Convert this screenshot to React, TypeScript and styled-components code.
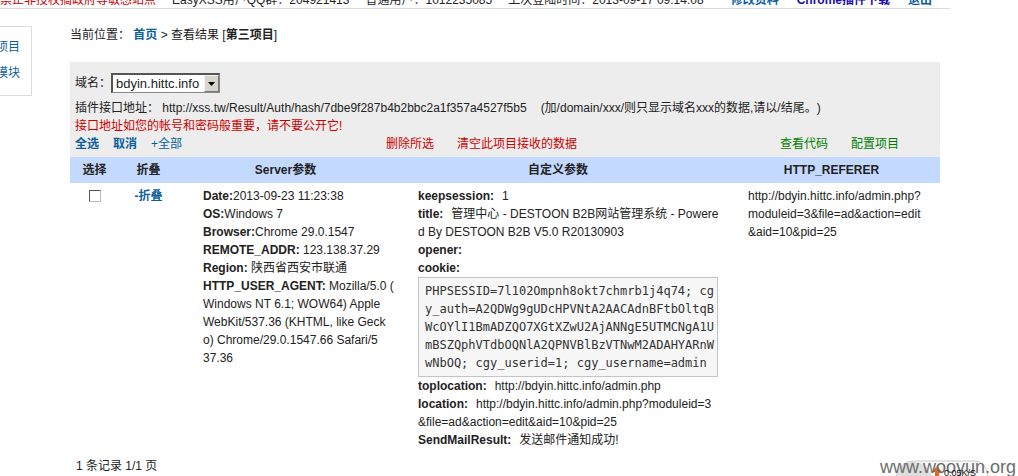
import React from "react";
import styled, { createGlobalStyle } from "styled-components";

const GlobalStyle = createGlobalStyle`
  * { box-sizing: border-box; }
  body {
    margin: 0;
    background: #fff;
    color: #222;
    font: 12px/18px "Liberation Sans", Arial, "Noto Sans CJK SC", sans-serif;
    text-spacing-trim: space-all;
    overflow: hidden;
  }
`;

const Page = styled.div`
  position: relative;
  overflow: hidden;
  min-height: 100vh;
`;

const TopBar = styled.header`
  display: flex;
  align-items: flex-end;
  height: 9px;
  margin-right: 68px;
  border-bottom: 1px solid #d9d9d9;
  white-space: nowrap;
  overflow: hidden;
`;

const TopItem = styled.span<{ $color?: string }>`
  flex: none;
  line-height: 16px;
  margin-right: 16px;
  color: ${(p) => p.$color ?? "#222"};
`;

const TopLink = styled.a<{ $color?: string }>`
  flex: none;
  line-height: 16px;
  margin-right: 18px;
  font-weight: bold;
  text-decoration: none;
  color: ${(p) => p.$color ?? "#0b5f9b"};
`;

const TopLinks = styled.nav`
  display: flex;
  margin-left: auto;
`;

const Body = styled.div`
  display: flex;
  align-items: flex-start;
  padding: 17px 78px 0 0;
`;

const SideMenu = styled.nav`
  flex: none;
  width: 32px;
  margin-right: 38px;
  padding: 7px 11px 9px 0;
  border: 1px solid #dcdcdc;
  border-left: 0;
  overflow: hidden;
`;

const SideLink = styled.a`
  display: flex;
  justify-content: flex-end;
  line-height: 26px;
  white-space: nowrap;
  text-decoration: none;
  color: #0b5f9b;
`;

const Main = styled.main`
  flex: 1;
  min-width: 0;
`;

const Breadcrumb = styled.div`
  margin-bottom: 18px;
`;

const Anchor = styled.a<{ $color?: string; $bold?: boolean }>`
  text-decoration: none;
  color: ${(p) => p.$color ?? "#0b5f9b"};
  font-weight: ${(p) => (p.$bold ? "bold" : "normal")};
`;

const Panel = styled.section`
  padding: 11px 5px 4px;
  background: #ededed;
`;

const DomainRow = styled.div`
  display: flex;
  align-items: center;
  margin-bottom: 6px;
`;

const SelectBox = styled.div`
  position: relative;
  width: 109px;
  height: 20px;
`;

const DomainSelect = styled.select`
  appearance: none;
  width: 100%;
  height: 100%;
  padding: 0 18px 0 3px;
  border: 1px solid #888;
  border-top: 2px solid #555;
  border-left: 2px solid #555;
  border-radius: 0;
  background: #fff;
  color: #222;
  font: 13px "Liberation Sans", Arial, sans-serif;
`;

const SelectArrow = styled.span`
  position: absolute;
  top: 2px;
  right: 1px;
  bottom: 1px;
  width: 15px;
  display: flex;
  align-items: center;
  justify-content: center;
  background: #d8d5ce;
  border: 1px solid #777;
  border-top-color: #f4f4f4;
  border-left-color: #f4f4f4;
  pointer-events: none;
`;

const ApiRow = styled.div`
  display: flex;
  flex-wrap: wrap;
  column-gap: 14px;
`;

const Warning = styled.div`
  color: #c00;
`;

const Actions = styled.div`
  display: grid;
  grid-template-columns: 311px 1fr auto;
`;

const ActionGroup = styled.div<{ $gap: number }>`
  display: flex;
  gap: ${(p) => p.$gap}px;
  padding-right: 36px;
`;

const Table = styled.table`
  width: 100%;
  table-layout: fixed;
  border-collapse: collapse;
`;

const HeadCell = styled.th`
  height: 26px;
  padding: 0;
  background: #c3d9ff;
  text-align: center;
`;

const Cell = styled.td<{ $center?: boolean }>`
  padding: ${(p) => (p.$center ? "4px 0" : "4px 0 0 25px")};
  text-align: ${(p) => (p.$center ? "center" : "left")};
  vertical-align: top;
  white-space: nowrap;
`;

const Check = styled.input`
  appearance: none;
  display: inline-block;
  width: 12px;
  height: 12px;
  margin: 3px 0 0;
  border: 1px solid #bbb;
  border-top-color: #555;
  border-left-color: #555;
  background: #fff;
`;

const Label = styled.b<{ $spaced?: boolean }>`
  margin-right: ${(p) => (p.$spaced ? 8 : 0)}px;
`;

const Cookie = styled.pre`
  width: 300px;
  margin: 0;
  padding: 4px 0 4px 6px;
  border: 1px solid #c4c4c4;
  background: #f7f7f7;
  color: #333;
  font: 12px/18px "DejaVu Sans Mono", monospace;
`;

const Pager = styled.div`
  padding: 8px 6px 0;
`;

const Watermark = styled.div`
  position: absolute;
  right: 2px;
  top: 457px;
  color: #6c6c6c;
  font-size: 18px;
  line-height: 20px;
`;

const SpeedWidget = styled.svg`
  position: absolute;
  right: 0;
  top: 456px;
`;

const Speed = styled.span`
  position: absolute;
  right: 42px;
  top: 464px;
  font-size: 9px;
  color: #111;
`;

const serverFields: [string, string[]][] = [
  ["Date:", ["2013-09-23 11:23:38"]],
  ["OS:", ["Windows 7"]],
  ["Browser:", ["Chrome 29.0.1547"]],
  ["REMOTE_ADDR:", [" 123.138.37.29"]],
  ["Region:", [" 陕西省西安市联通"]],
  [
    "HTTP_USER_AGENT:",
    [" Mozilla/5.0 (", "Windows NT 6.1; WOW64) Apple", "WebKit/537.36 (KHTML, like Geck", "o) Chrome/29.0.1547.66 Safari/5", "37.36"],
  ],
];

const cookie = [
  "PHPSESSID=7l102Ompnh8okt7chmrb1j4q74; cg",
  "y_auth=A2QDWg9gUDcHPVNtA2AACAdnBFtbOltqB",
  "WcOYlI1BmADZQO7XGtXZwU2AjANNgE5UTMCNgA1U",
  "mBSZQphVTdbOQNlA2QPNVBlBzVTNwM2ADAHYARnW",
  "wNbOQ; cgy_userid=1; cgy_username=admin",
].join("\n");

const Lines = ({ items }: { items: string[] }) => (
  <>
    {items.map((t, i) => (
      <React.Fragment key={i}>
        {i > 0 && <br />}
        {t}
      </React.Fragment>
    ))}
  </>
);

const Field = ({ name, lines, spaced }: { name: string; lines: string[]; spaced?: boolean }) => (
  <div>
    <Label $spaced={spaced}>{name}</Label>
    <Lines items={lines} />
  </div>
);

export default function App() {
  return (
    <Page>
      <GlobalStyle />
      <TopBar>
        <TopItem $color="#c00">禁止非授权搞政府等敏感站点</TopItem>
        <TopItem>EasyXSS用户QQ群：204921413</TopItem>
        <TopItem>普通用户：1012235085</TopItem>
        <TopItem>上次登陆时间：2013-09-17 09:14:08</TopItem>
        <TopLinks>
          <TopLink href="#profile">修改资料</TopLink>
          <TopLink href="#plugin" $color="#1a0dab">Chrome插件下载</TopLink>
          <TopLink href="#logout">退出</TopLink>
        </TopLinks>
      </TopBar>
      <Body>
        <SideMenu>
          <SideLink href="#projects">项目</SideLink>
          <SideLink href="#modules">模块</SideLink>
        </SideMenu>
        <Main>
          <Breadcrumb>
            当前位置： <Anchor href="#home" $bold>首页</Anchor> &gt; 查看结果 [<b>第三项目</b>]
          </Breadcrumb>
          <Panel>
            <DomainRow>
              <label htmlFor="domain">域名：</label>
              <SelectBox>
                <DomainSelect id="domain">
                  <option>bdyin.hittc.info</option>
                </DomainSelect>
                <SelectArrow>
                  <svg width="7" height="4" viewBox="0 0 7 4"><path d="M0 0h7L3.500 4z" fill="#000" /></svg>
                </SelectArrow>
              </SelectBox>
            </DomainRow>
            <ApiRow>
              <span>插件接口地址： http://xss.tw/Result/Auth/hash/7dbe9f287b4b2bbc2a1f357a4527f5b5</span>
              <span>(加/domain/xxx/则只显示域名xxx的数据,请以/结尾。)</span>
            </ApiRow>
            <Warning>接口地址如您的帐号和密码般重要，请不要公开它!</Warning>
            <Actions>
              <ActionGroup $gap={14}>
                <Anchor href="#all" $bold>全选</Anchor>
                <Anchor href="#none" $bold>取消</Anchor>
                <Anchor href="#expand">+全部</Anchor>
              </ActionGroup>
              <ActionGroup $gap={23}>
                <Anchor href="#delete" $color="#c00">删除所选</Anchor>
                <Anchor href="#clear" $color="#c00">清空此项目接收的数据</Anchor>
              </ActionGroup>
              <ActionGroup $gap={23}>
                <Anchor href="#code" $color="#008000">查看代码</Anchor>
                <Anchor href="#config" $color="#008000">配置项目</Anchor>
              </ActionGroup>
            </Actions>
          </Panel>
          <Table>
            <colgroup>
              <col width="49" />
              <col width="59" />
              <col width="215" />
              <col width="330" />
              <col />
            </colgroup>
            <thead>
              <tr>
                <HeadCell>选择</HeadCell>
                <HeadCell>折叠</HeadCell>
                <HeadCell>Server参数</HeadCell>
                <HeadCell>自定义参数</HeadCell>
                <HeadCell>HTTP_REFERER</HeadCell>
              </tr>
            </thead>
            <tbody>
              <tr>
                <Cell $center><Check type="checkbox" aria-label="选择" /></Cell>
                <Cell $center><Anchor href="#fold" $bold>-折叠</Anchor></Cell>
                <Cell>
                  {serverFields.map(([name, lines]) => (
                    <Field key={name} name={name} lines={lines} />
                  ))}
                </Cell>
                <Cell>
                  <Field spaced name="keepsession:" lines={["1"]} />
                  <Field spaced name="title:" lines={["管理中心 - DESTOON B2B网站管理系统 - Powere", "d By DESTOON B2B V5.0 R20130903"]} />
                  <Field spaced name="opener:" lines={[]} />
                  <Field spaced name="cookie:" lines={[]} />
                  <Cookie>{cookie}</Cookie>
                  <Field spaced name="toplocation:" lines={["http://bdyin.hittc.info/admin.php"]} />
                  <Field spaced name="location:" lines={["http://bdyin.hittc.info/admin.php?moduleid=3", "&file=ad&action=edit&aid=10&pid=25"]} />
                  <Field spaced name="SendMailResult:" lines={["发送邮件通知成功!"]} />
                </Cell>
                <Cell>
                  <Lines items={["http://bdyin.hittc.info/admin.php?", "moduleid=3&file=ad&action=edit", "&aid=10&pid=25"]} />
                </Cell>
              </tr>
            </tbody>
          </Table>
          <Pager>1 条记录 1/1 页</Pager>
        </Main>
      </Body>
      <SpeedWidget width="128" height="20" viewBox="0 0 128 20" aria-hidden="true">
        <path d="M6 20Q10 5 24 5H84Q96 5 98 20" fill="#fafafa" stroke="#c8c8c8" />
        <circle cx="24" cy="24" r="18" fill="#dedede" />
        <path d="M45 20V16h-3l5-6 5 6h-3v4z" fill="#e8671b" />
      </SpeedWidget>
      <Watermark>www.wooyun.org</Watermark>
      <Speed>0.05K/S</Speed>
    </Page>
  );
}
